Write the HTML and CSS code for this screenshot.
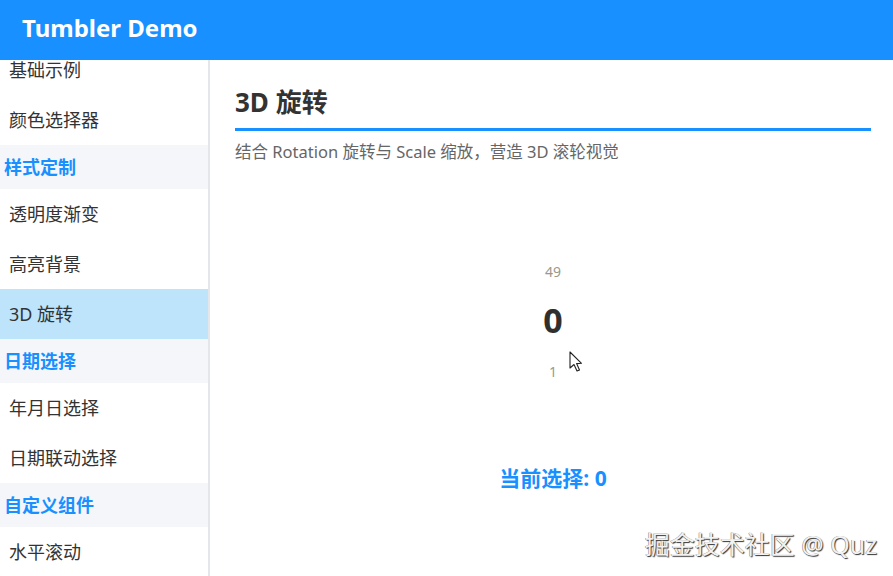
FILE: index.html
```html
<!DOCTYPE html>
<html lang="zh-CN">
<head>
  <meta charset="UTF-8">
  <meta name="viewport" content="width=device-width, initial-scale=1.0">
  <title>Tumbler Demo</title>
  <link rel="stylesheet" href="styles.css">
</head>
<body>
  <header class="topbar">
    <h1>Tumbler Demo</h1>
  </header>

  <div class="layout">
    <!-- 左侧菜单 -->
    <nav class="sidebar" id="sidebar">
      <div class="group">基础用法</div>
      <div class="item">基础示例</div>
      <div class="item">颜色选择器</div>
      <div class="group">样式定制</div>
      <div class="item">透明度渐变</div>
      <div class="item">高亮背景</div>
      <div class="item active">3D 旋转</div>
      <div class="group">日期选择</div>
      <div class="item">年月日选择</div>
      <div class="item">日期联动选择</div>
      <div class="group">自定义组件</div>
      <div class="item">水平滚动</div>
      <div class="item">自定义内容</div>
    </nav>

    <!-- 右侧内容 -->
    <main class="content">
      <h2 class="page-title">3D 旋转</h2>
      <p class="desc">结合 Rotation 旋转与 Scale 缩放，营造 3D 滚轮视觉</p>

      <div class="tumbler">
        <div class="cell side">49</div>
        <div class="cell current">0</div>
        <div class="cell side">1</div>
      </div>

      <div class="result">当前选择: 0</div>

      <svg class="pointer" width="14" height="22" viewBox="0 0 14 22">
        <path d="M1 1 L1 17 L5 13.5 L8 20 L10.5 19 L7.6 12.6 L12.5 12.3 Z" fill="#fff" stroke="#222" stroke-width="1.1" stroke-linejoin="round"/>
      </svg>

      <div class="watermark">掘金技术社区 @ Quz</div>
    </main>
  </div>

  <script>
    // 菜单滚动到当前分组附近
    document.getElementById("sidebar").scrollTop = 59;
  </script>
</body>
</html>
```

FILE: styles.css
```css
* {
  box-sizing: border-box;
}
html, body {
  margin: 0;
  height: 100%;
}
body {
  font-family: "Noto Sans", "Noto Sans CJK SC", sans-serif;
  color: #333;
  background: #fff;
  overflow: hidden;
}
.topbar {
  height: 60px;
  background-color: #1890ff;
  display: flex;
  align-items: center;
  padding: 0 0 5px 22px;
}
.topbar h1 {
  margin: 0;
  color: #fff;
  font-size: 24px;
  font-weight: 700;
  letter-spacing: 0;
}
.layout {
  display: flex;
  height: calc(100% - 60px);
}
.sidebar {
  width: 210px;
  flex-shrink: 0;
  border-right: 2px solid #e4e6ea;
  overflow-y: auto;
  scrollbar-width: none;
}
.sidebar::-webkit-scrollbar {
  display: none;
}
.group {
  height: 44px;
  line-height: 44px;
  padding-left: 4px;
  background-color: #f4f6f9;
  color: #1890ff;
  font-size: 18px;
  font-weight: 700;
}
.item {
  height: 50px;
  line-height: 50px;
  padding-left: 9px;
  font-size: 18px;
  color: #333;
}
.item.active {
  background-color: #bde4fb;
}
.content {
  flex: 1;
  position: relative;
  padding: 0 22px 0 25px;
}
.page-title {
  margin: 25px 0 0;
  font-size: 26px;
  font-weight: 700;
  color: #333;
  padding-bottom: 8px;
  border-bottom: 3px solid #1890ff;
  line-height: 35px;
}
.desc {
  margin: 8px 0 0;
  font-size: 16.5px;
  color: #666;
}
.tumbler {
  margin-top: 82px;
  display: flex;
  flex-direction: column;
  align-items: center;
}
.cell {
  height: 50px;
  line-height: 50px;
  text-align: center;
}
.cell.side {
  font-size: 14px;
  color: #9a9a8c;
  padding-top: 2px;
}
.cell.current {
  font-size: 34px;
  font-weight: 700;
  color: #2f2f2f;
}
.result {
  margin-top: 67px;
  text-align: center;
  font-size: 21px;
  font-weight: 700;
  color: #1890ff;
}
.pointer {
  position: absolute;
  left: 359px;
  top: 291px;
}
.watermark {
  position: absolute;
  right: 16px;
  bottom: 15px;
  font-size: 25px;
  color: #f2f2f2;
  text-shadow: 1px 1px 1px #333, -0.5px -0.5px 0 #888;
}
```
